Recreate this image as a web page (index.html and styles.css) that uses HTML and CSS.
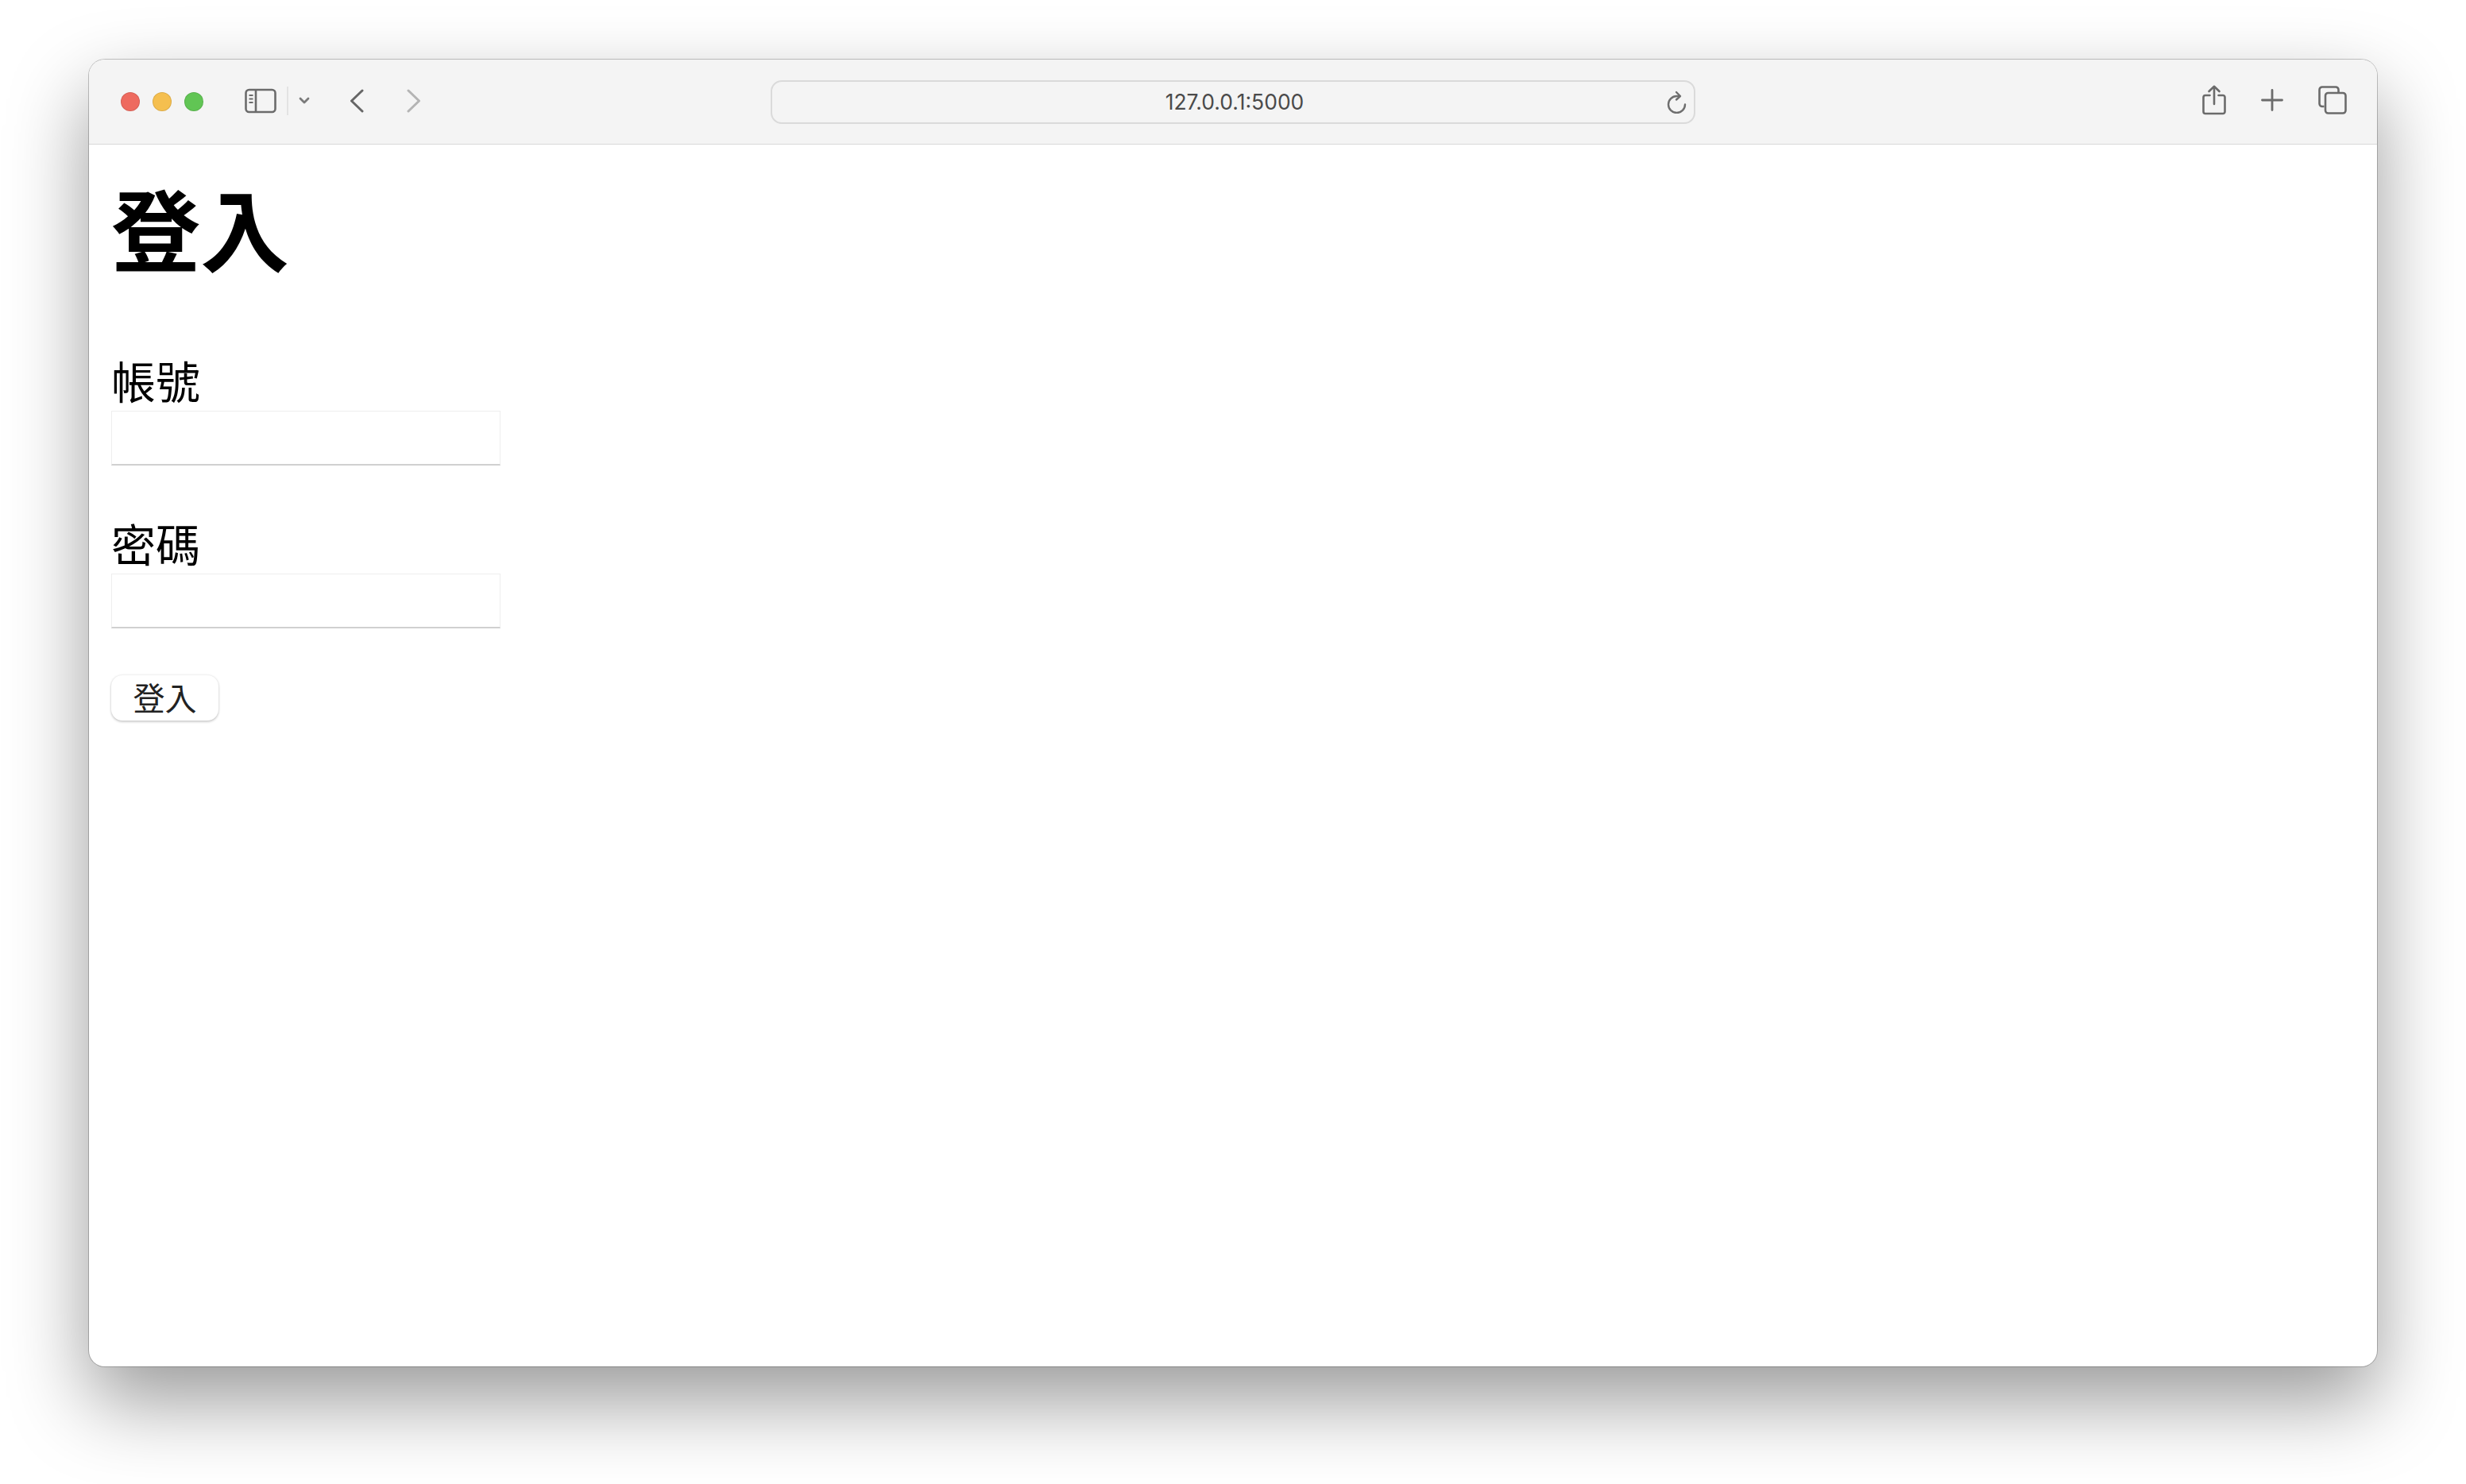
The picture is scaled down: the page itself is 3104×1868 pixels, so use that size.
FILE: index.html
```html
<!DOCTYPE html>
<html lang="zh-Hant">
<head>
    <meta charset="UTF-8">
    <title>登入</title>
    <link rel="stylesheet" href="styles.css">
</head>
<body>
    <div class="window">
        <div class="toolbar">
            <div class="tools-left">
                <span class="dot red"></span>
                <span class="dot yellow"></span>
                <span class="dot green"></span>
                <svg class="ic-sidebar" width="40" height="32" viewBox="0 0 40 32" fill="none" stroke="#6b6b6b" stroke-width="2.6">
                    <rect x="1.5" y="2" width="37" height="28" rx="4"/>
                    <path d="M14 2v28"/>
                    <path d="M5.5 9h5M5.5 13.5h5M5.5 18h5" stroke-width="2"/>
                </svg>
                <span class="divider"></span>
                <svg class="ic-chevron" width="14" height="10" viewBox="0 0 14 10" fill="none" stroke="#7a7a7a" stroke-width="2.8" stroke-linecap="round" stroke-linejoin="round">
                    <path d="M2 2l5 5 5-5"/>
                </svg>
                <svg class="ic-back" width="18" height="30" viewBox="0 0 18 30" fill="none" stroke="#666" stroke-width="3" stroke-linecap="round" stroke-linejoin="round">
                    <path d="M16 2L2.500 15 16 28"/>
                </svg>
                <svg class="ic-forward" width="18" height="30" viewBox="0 0 18 30" fill="none" stroke="#b4b4b4" stroke-width="3" stroke-linecap="round" stroke-linejoin="round">
                    <path d="M2 2l13.500 13L2 28"/>
                </svg>
            </div>
            <div class="address">
                <span class="url">127.0.0.1:5000</span>
                <svg class="ic-reload" width="27" height="30" viewBox="0 0 27 30" fill="none" stroke="#6e6e6e" stroke-width="2.400" stroke-linecap="round" stroke-linejoin="round">
                    <path d="M25 18.500A10.500 10.500 0 1 1 14.500 8h3"/>
                    <path d="M14 3l5 5-5 4.500"/>
                </svg>
            </div>
            <div class="tools-right">
                <svg width="30" height="38" viewBox="0 0 30 38" fill="none" stroke="#6b6b6b" stroke-width="2.6" stroke-linecap="round" stroke-linejoin="round">
                    <path d="M9.500 13H4a2.500 2.500 0 0 0-2.500 2.500v18A2.500 2.500 0 0 0 4 36h22a2.500 2.500 0 0 0 2.500-2.500v-18A2.500 2.500 0 0 0 26 13h-5.500"/>
                    <path d="M15 24V2M8.500 8L15 1.800 21.500 8"/>
                </svg>
                <svg class="ic-plus" width="28" height="28" viewBox="0 0 28 28" fill="none" stroke="#6b6b6b" stroke-width="2.8" stroke-linecap="round">
                    <path d="M14 1.500v25M1.500 14h25"/>
                </svg>
                <svg class="ic-tabs" width="36" height="36" viewBox="0 0 36 36" fill="none" stroke="#6b6b6b" stroke-width="2.6" stroke-linejoin="round">
                    <path d="M7.500 26H5a3.500 3.500 0 0 1-3.500-3.500V5A3.500 3.500 0 0 1 5 1.500h17A3.500 3.500 0 0 1 25.500 5v3"/>
                    <rect x="9" y="9" width="25.500" height="25.500" rx="3.500"/>
                </svg>
            </div>
        </div>
        <div class="page">
            <h1>登入</h1>
            <form class="login-form">
                <label for="username">帳號</label>
                <input type="text" id="username">
                <label for="password" class="second">密碼</label>
                <input type="password" id="password">
                <button type="button" class="submit">登入</button>
            </form>
        </div>
    </div>
</body>
</html>
```

FILE: styles.css
```css
html, body {
    height: 100%;
}

body {
    margin: 0;
    padding: 75px 112px 148px;
    box-sizing: border-box;
    background: #fff;
    overflow: hidden;
}

.window {
    display: flex;
    flex-direction: column;
    height: 100%;
    border-radius: 20px;
    overflow: hidden;
    background: #fff;
    box-shadow: 0 0 0 1px rgba(0, 0, 0, 0.22), 0 44px 100px rgba(0, 0, 0, 0.4);
}

/* browser toolbar */
.toolbar {
    display: grid;
    grid-template-columns: 858px 1164px 1fr;
    align-items: center;
    height: 106px;
    flex: none;
    background: #f4f4f4;
    border-bottom: 1px solid #d9d9d9;
}

.tools-left {
    display: flex;
    align-items: center;
    padding-left: 40px;
}

.tools-left svg {
    margin-top: -2px;
}

.dot {
    width: 24px;
    height: 24px;
    box-sizing: border-box;
    border-radius: 50%;
    margin-right: 16px;
    border: 1px solid rgba(0, 0, 0, 0.1);
}

.red {
    background: #ee6a5f;
}

.yellow {
    background: #f5bf4f;
}

.green {
    background: #61c554;
}

.ic-sidebar {
    margin-left: 36px;
}

.divider {
    width: 2px;
    height: 36px;
    margin-left: 13px;
    margin-top: -2px;
    background: #e3e3e3;
}

.ic-chevron {
    margin-left: 13px;
}

.ic-back {
    margin-left: 50px;
}

.ic-forward {
    margin-left: 54px;
}

.address {
    display: flex;
    align-items: center;
    justify-content: center;
    position: relative;
    height: 55px;
    box-sizing: border-box;
    padding-left: 4px;
    border: 2px solid #dadada;
    border-radius: 14px;
}

.url {
    font-family: Inter, "Liberation Sans", sans-serif;
    font-size: 26.5px;
    color: #4a4a4a;
}

.ic-reload {
    position: absolute;
    right: 9px;
    top: 10px;
}

.tools-right {
    display: flex;
    align-items: center;
    padding-left: 638px;
    padding-bottom: 4px;
    gap: 44px;
}

/* page content */
.page {
    flex: 1;
    padding: 0 28px;
    font-family: "Noto Sans CJK TC", sans-serif;
    color: #000;
}

h1 {
    margin: 37px 0 0;
    font-size: 112px;
    line-height: 132px;
    font-weight: 700;
}

.login-form {
    display: flex;
    flex-direction: column;
    align-items: flex-start;
    margin-top: 90px;
}

label {
    font-size: 56px;
    line-height: 74px;
    margin-bottom: 2px;
}

.second {
    margin-top: 60px;
}

input {
    width: 490px;
    height: 69px;
    box-sizing: border-box;
    padding: 0;
    background: #fff;
    border: 1px solid #eee;
    border-bottom: 2px solid #d0d0d0;
}

.submit {
    width: 135px;
    height: 57px;
    margin-top: 59px;
    padding: 0 0 3px;
    background: #fff;
    border: 0;
    border-radius: 14px;
    box-shadow: 0 0 3px rgba(0, 0, 0, 0.14), 0 2px 3px rgba(0, 0, 0, 0.16);
    font-family: "Noto Sans CJK TC", sans-serif;
    font-size: 40px;
    line-height: 54px;
    color: #222;
}
```
